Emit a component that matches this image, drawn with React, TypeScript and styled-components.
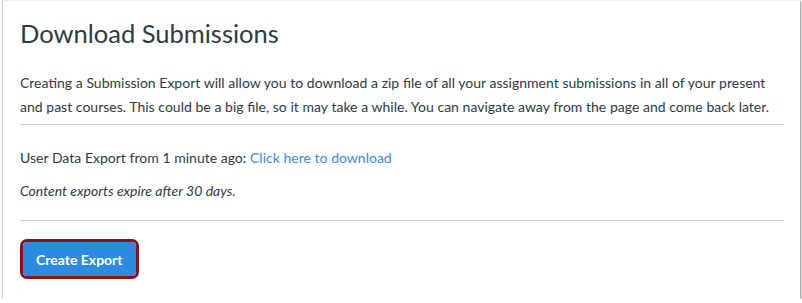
import React from "react";
import styled, { createGlobalStyle } from "styled-components";

const GlobalStyle = createGlobalStyle`
  html, body {
    margin: 0;
    padding: 0;
    background: #ffffff;
  }
  body {
    font-family: Lato, "Helvetica Neue", Helvetica, Arial, sans-serif;
    color: #2d3b45;
  }
`;

const Frame = styled.div`
  width: 798px;
  height: 299px;
  margin-left: 2px;
  box-sizing: border-box;
  background: #ffffff;
  border-left: 1px solid #d4d4d4;
  border-top: 1px solid #f0f0f0;
  box-shadow: 1px 1px 2px rgba(0, 0, 0, 0.45);
  padding: 16px 16px 0 17px;
`;

const Title = styled.h1`
  margin: 0;
  font-size: 25.5px;
  line-height: 32px;
  font-weight: 400;
  color: #2d3b45;
`;

const Text = styled.p<{ $italic?: boolean }>`
  margin: 0;
  font-size: 14px;
  line-height: 23px;
  word-spacing: 0.1px;
  font-style: ${(p) => (p.$italic ? "italic" : "normal")};
  color: #2d3b45;
`;

const Intro = styled(Text)`
  margin: 22px 0 5px;
  line-height: 24px;
`;

const Rule = styled.hr`
  border: 0;
  border-top: 1px solid #c7cdd1;
  margin: 0;
`;

const Section = styled.div`
  display: flex;
  flex-direction: column;
  gap: 10px;
  padding: 21px 0 18px;
`;

const DownloadLink = styled.a`
  color: #3b8ae0;
  text-decoration: none;
`;

const Actions = styled.div`
  padding-top: 18px;
`;

const FocusRing = styled.span`
  display: inline-block;
  border: 3px solid #8b1017;
  border-radius: 7px;
`;

const Button = styled.button`
  display: block;
  border: 0;
  border-radius: 4px;
  background: #2d8ae2;
  color: #ffffff;
  font-family: Lato, "Helvetica Neue", Helvetica, Arial, sans-serif;
  font-size: 14px;
  font-weight: 700;
  height: 34px;
  padding: 0 13px;
  cursor: pointer;
`;

export default function App() {
  return (
    <>
      <GlobalStyle />
      <Frame>
        <Title>Download Submissions</Title>
        <Intro>
          Creating a Submission Export will allow you to download a zip file of all your assignment submissions in all
          of your present and past courses. This could be a big file, so it may take a while. You can navigate away from
          the page and come back later.
        </Intro>
        <Rule />
        <Section>
          <Text>
            User Data Export from 1 minute ago: <DownloadLink href="#">Click here to download</DownloadLink>
          </Text>
          <Text $italic>Content exports expire after 30 days.</Text>
        </Section>
        <Rule />
        <Actions>
          <FocusRing>
            <Button type="button">Create Export</Button>
          </FocusRing>
        </Actions>
      </Frame>
    </>
  );
}
